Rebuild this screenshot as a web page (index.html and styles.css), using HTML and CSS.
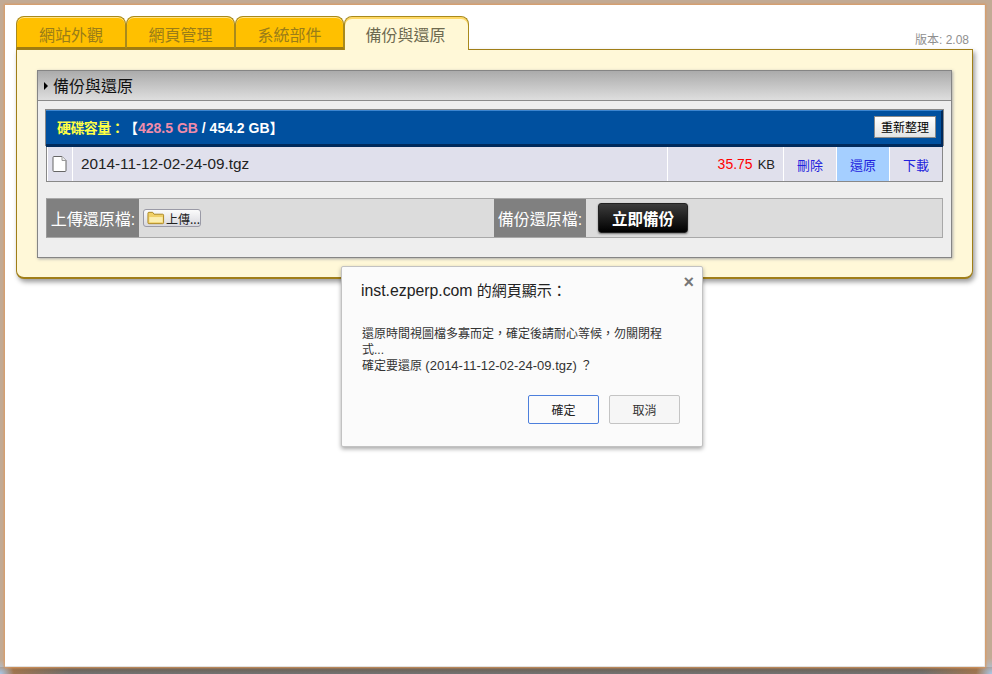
FILE: index.html
```html
<!DOCTYPE html>
<html lang="zh-Hant">
<head>
<meta charset="utf-8">
<title>備份與還原</title>
<link rel="stylesheet" href="styles.css">
</head>
<body>
<div class="window">
  <div class="tabbar">
    <div class="tabs">
      <div class="tab t1">網站外觀</div>
      <div class="tab t2">網頁管理</div>
      <div class="tab t3">系統部件</div>
      <div class="tab active">備份與還原</div>
    </div>
    <div class="version">版本: 2.08</div>
  </div>
  <div class="panel">
    <div class="box">
      <div class="box-head"><span class="arrow"></span>備份與還原</div>
      <div class="box-body">
        <div class="disk-bar">
          <div class="disk-text"><span class="yl">硬碟容量：</span>【<span class="pk">428.5 GB</span> / 454.2 GB】</div>
          <button class="tidy">重新整理</button>
        </div>
        <div class="file-row">
          <div class="c-icon">
            <svg width="15" height="16" viewBox="0 0 15 16"><path d="M2 .5h8l4 4v10q0 1-1 1H2q-1 0-1-1v-13q0-1 1-1z" fill="#fff" stroke="#666"/><path d="M10 .5v4h4" fill="#eee" stroke="#999"/></svg>
          </div>
          <div class="c-name">2014-11-12-02-24-09.tgz</div>
          <div class="c-size"><span class="red">35.75</span><span class="kb">KB</span></div>
          <div class="c-act">刪除</div>
          <div class="c-act c-res">還原</div>
          <div class="c-act c-down">下載</div>
        </div>
        <div class="tools">
          <div class="label">上傳還原檔:</div>
          <div class="tool-mid">
            <button class="upload">
              <svg width="19" height="14" viewBox="0 0 19 14"><path d="M1 3V2q0-1 1-1h4l1.500 2h9q1 0 1 1v8q0 1-1 1H2q-1 0-1-1z" fill="#f0d068" stroke="#a88420"/><path d="M2.500 6h14v5.500h-14z" fill="#fbeeb0"/></svg>
              上傳...
            </button>
          </div>
          <div class="label">備份還原檔:</div>
          <div class="tool-end"><button class="backup">立即備份</button></div>
        </div>
      </div>
    </div>
  </div>
</div>
<div class="dialog">
  <span class="close">×</span>
  <div class="d-title"><span class="d-host">inst.ezperp.com</span> 的網頁顯示：</div>
  <div class="d-msg">還原時間視圖檔多寡而定，確定後請耐心等候，勿關閉程式...<br>確定要還原 <span class="d-file">(2014-11-12-02-24-09.tgz)</span> ？</div>
  <div class="d-btns">
    <button class="d-btn ok">確定</button>
    <button class="d-btn">取消</button>
  </div>
</div>
</body>
</html>
```
FILE: styles.css
```css
* { box-sizing: border-box; }
html, body { height: 100%; }
body {
  margin: 0;
  width: 992px;
  height: 674px;
  overflow: hidden;
  padding: 5px 7px 7px 5px;
  background:
    radial-gradient(circle at 0 100%, #a8c8ea 0, rgba(168,200,234,0) 14px),
    radial-gradient(circle at 100% 100%, #a8c8ea 0, rgba(168,200,234,0) 16px),
    linear-gradient(90deg, rgba(176,120,70,.9) 0, rgba(107,102,96,0) 70px, rgba(107,102,96,0) 922px, rgba(176,120,70,.9) 100%) 0 100% / 100% 7px no-repeat,
    linear-gradient(180deg, #6a5c4e 0, #737373 100%) 0 100% / 100% 7px no-repeat,
    #c2aa94;
  text-spacing-trim: space-all;
  font-family: "Liberation Sans", "Noto Sans CJK TC", sans-serif;
  position: relative;
}
.window {
  height: 662px;
  background: #fff;
  padding: 11px 13px 0 11px;
  box-shadow: 0 0 2px 1px #dc9a60, inset 0 -1px 0 #e2e2e2, inset -1px 0 0 #eeeeee;
}
.tabbar { display: flex; justify-content: space-between; align-items: flex-end; height: 33px; }
.tabs { display: flex; align-items: flex-end; }
.tab {
  height: 33px;
  background: #ffc000;
  border: 1px solid #a98a1c;
  border-bottom: 2px solid #a07c10;
  border-radius: 8px 8px 0 0;
  box-shadow: inset 0 1px 0 #ffe38a;
  color: #9a7d18;
  font-size: 16px;
  line-height: 37px;
  text-align: center;
}
.t1 { width: 110px; }
.t2 { width: 109px; }
.t3 { width: 109px; }
.active {
  width: 125px;
  height: 34px;
  margin-bottom: -1px;
  padding-right: 2px;
  position: relative;
  z-index: 1;
  background: #fff8d6;
  border-color: #a98a1c;
  border-bottom: 0;
  box-shadow: inset 0 2px 0 #ffd966;
  color: #6e6a50;
}
.version { color: #8f8f8f; font-size: 12px; margin: 0 3px 1px 0; line-height: 15px; }
.panel {
  width: 957px;
  height: 230px;
  background: #fff8d8;
  border: 1px solid #a07e18;
  border-bottom-width: 2px;
  border-radius: 0 0 8px 8px;
  padding: 20px 20px 0;
  box-shadow: 2px 3px 5px #9a9a9a;
}
.box {
  width: 915px;
  height: 188px;
  border: 1px solid #858585;
  background: #eeeeee;
  box-shadow: 1px 1px 3px #aaa;
}
.box-head {
  height: 30px;
  display: flex;
  align-items: center;
  padding: 0 0 2px 6px;
  background: linear-gradient(180deg, #ababab, #dedede);
  border-bottom: 1px solid #8a8a8a;
  font-size: 16px;
  color: #111;
}
.arrow {
  width: 0; height: 0;
  margin: 2px 5px 0 0;
  border-left: 4px solid #000;
  border-top: 4px solid transparent;
  border-bottom: 4px solid transparent;
}
.box-body { padding: 9px 8px 0; }
.disk-bar {
  height: 37px;
  display: flex;
  justify-content: space-between;
  align-items: center;
  background: #00509f;
  border-top: 1px solid #3d86d0;
  border-right: 2px solid #002a5c;
  border-bottom: 3px solid #002a5c;
  padding: 0 5px 0 11px;
  box-shadow: -1px -1px 0 #888, 1px -1px 0 #888;
}
.disk-text { color: #fff; font-size: 14px; font-weight: bold; margin-top: -2px; }
.yl { color: #ffff44; letter-spacing: -0.6px; }
.pk { color: #f08caa; }
.tidy {
  width: 62px;
  height: 22px;
  padding: 0;
  margin-top: -2px;
  border: 1px solid #8a8a8a;
  background: linear-gradient(180deg, #fff, #e4e4e4);
  font: 12px "Noto Sans CJK TC", sans-serif;
  color: #000;
}
.file-row {
  height: 35px;
  display: flex;
  align-items: stretch;
  background: #e0e0ec;
  border: 1px solid #888;
  border-top: 0;
  font-size: 15.300px;
  color: #222;
}
.file-row > div { display: flex; align-items: center; border-right: 1px solid #fff; }
.c-icon { width: 26px; justify-content: center; border-left: 1px solid #fff; padding-right: 1px; }
.c-name { flex: 1; padding-left: 8px; }
.c-size { width: 116px; justify-content: flex-end; padding-right: 8px; font-size: 14px; }
.red { color: #f00; margin-right: 5px; }
.kb { font-size: 13px; }
.c-act { width: 53px; justify-content: center; font-size: 13px; color: #2222dd; }
.c-down { width: 52px; border-right: 0 !important; }
.c-res { background: #a5cfff; }
.tools {
  height: 40px;
  margin-top: 16px;
  display: flex;
  background: #dcdcdc;
  border: 1px solid #a8a8a8;
  border-left-color: #999;
}
.label {
  width: 92px;
  background: #808080;
  color: #fff;
  font-size: 16px;
  white-space: nowrap;
  display: flex;
  align-items: center;
  justify-content: center;
}
.tool-mid { width: 355px; display: flex; align-items: center; padding-left: 4px; }
.upload {
  width: 58px;
  height: 18px;
  padding: 0 0 0 3px;
  display: flex;
  align-items: center;
  gap: 1px;
  border: 1px solid #9a9aa6;
  border-radius: 3px;
  background: linear-gradient(180deg, #fbfbfb, #d8d8de);
  font: 12px "Noto Sans CJK TC", sans-serif;
  color: #222;
  white-space: nowrap;
}
.tool-end { flex: 1; display: flex; align-items: center; padding-left: 12px; }
.backup {
  width: 90px;
  height: 30px;
  padding: 0;
  border: 1px solid #222;
  border-radius: 3px;
  background: linear-gradient(180deg, #3c3c3c, #000);
  box-shadow: 0 1px 2px #777;
  color: #fff;
  font: bold 15.500px "Noto Sans CJK TC", sans-serif;
}
.dialog {
  position: absolute;
  left: 341px;
  top: 266px;
  width: 362px;
  height: 181px;
  background: #fbfbfb;
  border: 1px solid #c2c2c2;
  border-radius: 2px;
  box-shadow: 0 2px 4px rgba(0,0,0,.35);
  padding: 14px 19px 0;
  color: #333;
}
.close {
  position: absolute;
  right: 8px;
  top: 5px;
  font: bold 18px/20px "Liberation Sans", sans-serif;
  color: #777;
}
.d-title { font-size: 15px; line-height: 20px; color: #222; }
.d-host { font-size: 15.800px; }
.d-msg { margin-top: 25px; margin-left: 1px; width: 310px; font-size: 12px; line-height: 16px; color: #333; }
.d-file { font-size: 13px; }
.d-btns { display: flex; justify-content: flex-end; gap: 10px; margin-top: 21px; padding-right: 3px; }
.d-btn {
  width: 71px;
  height: 29px;
  padding: 0;
  border: 1px solid #c4c4c4;
  border-radius: 2px;
  background: #f6f6f6;
  font: 12px "Noto Sans CJK TC", sans-serif;
  color: #333;
}
.ok { border-color: #4d7fdc; background: #fbfbfb; color: #222; }
```
